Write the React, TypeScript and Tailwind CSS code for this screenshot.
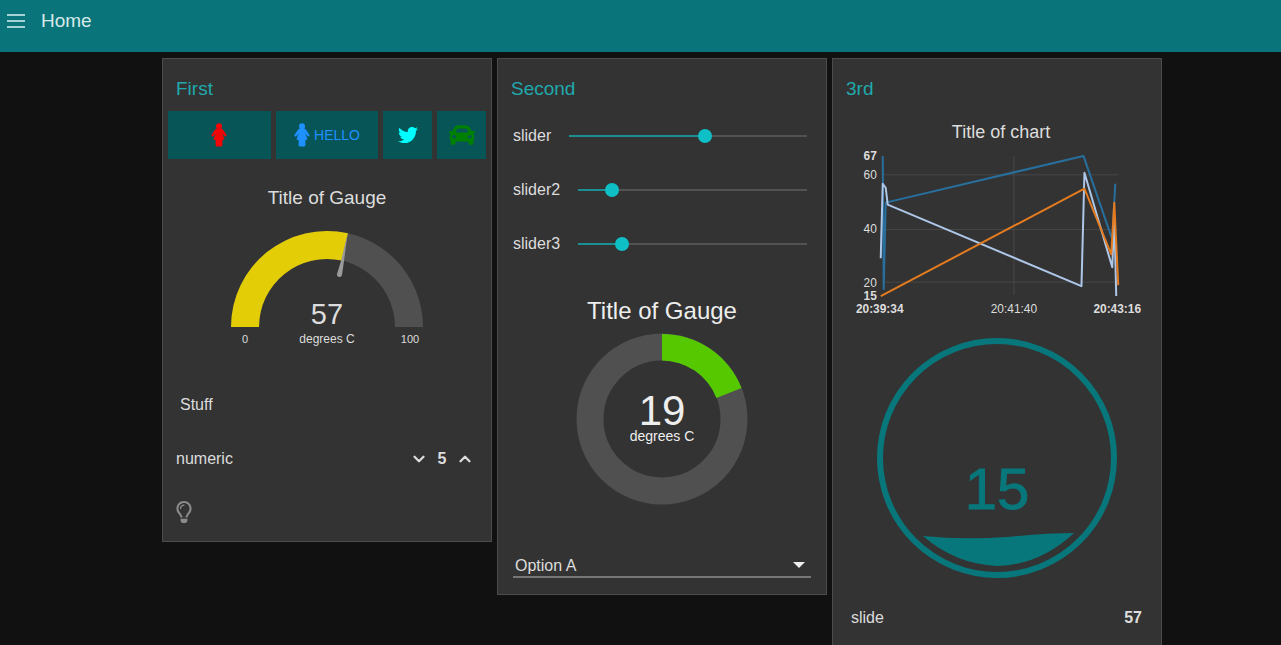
import { ReactNode, useState } from 'react';
import { FaCar, FaRegLightbulb, FaTwitter } from 'react-icons/fa';
import { ChevronDown, ChevronUp } from 'lucide-react';

type CardProps = {
  title: string;
  children: ReactNode;
};

const Card = ({ title, children }: CardProps) => (
  <section className="border border-[#4c4c4c] bg-[#333333] px-[5px] pt-4">
    <h2 className="h-7 px-2 text-[19px] leading-7 text-[#1fa9ad]">{title}</h2>
    {children}
  </section>
);

const FemaleIcon = () => (
  <svg viewBox="0 0 16 24" className="h-6 w-4" fill="currentColor" aria-hidden="true">
    <circle cx="8" cy="3.200" r="3" />
    <path d="M5.800 5.500 H10.200 Q11.200 5.600 11.800 6.600 L15.300 11.600 Q15.900 12.800 15 13.400 Q14.100 13.900 13.400 13 L11.400 10.400 L13.600 16.800 H11.400 V22.300 Q11.300 23.600 10 23.600 H6 Q4.700 23.600 4.600 22.300 V16.800 H2.400 L4.600 10.400 L2.600 13 Q1.900 13.900 1 13.400 Q0.100 12.800 0.700 11.600 L4.200 6.600 Q4.800 5.600 5.800 5.500 Z" />
  </svg>
);

type SliderProps = {
  id: string;
  label: string;
  initial: number;
};

const Slider = ({ id, label, initial }: SliderProps) => {
  const [value, setValue] = useState(initial);

  return (
    <div className="flex h-[54px] items-center gap-[18px]">
      <label htmlFor={id}>{label}</label>
      <div className="relative flex h-4 min-w-0 flex-1 items-center">
        <div className="h-[2px] w-full bg-[#525252]">
          <div className="h-full bg-[#1b9094]" style={{ width: `${value}%` }} />
        </div>
        <div
          className="absolute size-[14px] -translate-x-1/2 rounded-full bg-[#0fbfc6]"
          style={{ left: `${value}%` }}
        />
        <input
          id={id}
          type="range"
          value={value}
          onChange={(e) => setValue(Number(e.target.value))}
          className="absolute inset-0 w-full cursor-pointer opacity-0"
        />
      </div>
    </div>
  );
};

const Gauge = () => (
  <svg viewBox="0 0 202 130" className="mx-auto block w-[202px]" fill="#dddddd" textAnchor="middle">
    <path d="M5 106 A96 96 0 0 1 197 106 H169 A68 68 0 0 0 33 106 Z" fill="#505050" />
    <path d="M5 106 A96 96 0 0 1 121.900 12.300 L115.800 39.600 A68 68 0 0 0 33 106 Z" fill="#e2cd06" />
    <path d="M121.500 13 L115 40 L111 53 A2.500 2.500 0 0 0 116 54 L118 40 Z" fill="#9a9a9a" />
    <text x="101" y="103" fontSize="29">57</text>
    <text x="101" y="122" fontSize="12">degrees C</text>
    <text x="19" y="122" fontSize="11">0</text>
    <text x="184" y="122" fontSize="11">100</text>
  </svg>
);

const Donut = () => (
  <svg viewBox="0 0 172 172" className="mx-auto block w-[172px]" fill="#eeeeee" textAnchor="middle">
    <circle cx="86" cy="86" r="72" fill="none" stroke="#505050" strokeWidth="27" />
    <path d="M86 1 A85 85 0 0 1 165.500 55 L140.400 65 A58.500 58.500 0 0 0 86 27.500 Z" fill="#55c800" />
    <text x="86" y="92" fontSize="42">19</text>
    <text x="86" y="108" fontSize="14">degrees C</text>
  </svg>
);

const Chart = () => (
  <svg viewBox="0 0 320 174" className="block w-full" fontSize="12" fill="#dddddd">
    <path d="M44 29 H282 M44 84 H282 M44 137 H282 M177 10 V150" stroke="#484848" fill="none" />
    <g textAnchor="end">
      <text x="39" y="14" fontWeight="bold">67</text>
      <text x="39" y="33">60</text>
      <text x="39" y="88">40</text>
      <text x="39" y="142">20</text>
      <text x="39" y="155" fontWeight="bold">15</text>
    </g>
    <g textAnchor="middle">
      <text x="42" y="168" fontWeight="bold">20:39:34</text>
      <text x="177" y="168">20:41:40</text>
      <text x="281" y="168" fontWeight="bold">20:43:16</text>
    </g>
    <g fill="none" strokeWidth="2" strokeLinejoin="round">
      <path d="M45 10 L46 144 L48 57 L247 10 L276 94 L279 38" stroke="#286f9e" />
      <path d="M43 113 L45 38 L48 42 L50 59 L245 141 L248 27 L276 122 L278 70 L280 151" stroke="#aec7e8" />
      <path d="M43 151 L248 43 L275 109 L278 57 L282 140" stroke="#e57c1f" />
    </g>
  </svg>
);

const Tank = () => (
  <svg viewBox="0 0 240 240" className="mx-auto block w-[240px]" fill="#08777b">
    <circle cx="120" cy="120" r="117" fill="none" stroke="#08777b" strokeWidth="6" />
    <path d="M46 198 Q86 202 130 199 Q170 195 197 195 Q163 227 120 228 Q78 226 46 198 Z" />
    <text x="120" y="171" fontSize="58" textAnchor="middle" stroke="#08777b" strokeWidth="1">
      15
    </text>
  </svg>
);

export default function App() {
  const [amount, setAmount] = useState(5);

  return (
    <div className="flex h-screen flex-col overflow-hidden bg-[#111111] font-['Liberation_Sans',Arial,sans-serif] text-base text-[#dddddd]">
      <header className="flex h-[52px] shrink-0 items-start gap-4 bg-[#097479] px-[7px] pt-[9px]">
        <button type="button" aria-label="Menu" className="grid h-6 w-[18px] content-center gap-1">
          <span className="h-[2px] bg-[#a5d3d4]" />
          <span className="h-[2px] bg-[#a5d3d4]" />
          <span className="h-[2px] bg-[#a5d3d4]" />
        </button>
        <h1 className="text-[19px] leading-6 text-[#d5e9ea]">Home</h1>
      </header>

      <main className="min-h-0 flex-1 overflow-hidden pt-[6px] pl-[43px]">
        <div className="mx-auto grid max-w-[1000px] grid-cols-3 items-start gap-[5px]">
          <Card title="First">
            <div className="mt-2 grid h-12 grid-cols-6 gap-[5px]">
              <button
                type="button"
                aria-label="Female"
                className="col-span-2 grid place-items-center bg-[#085558] text-[#f00606]"
              >
                <FemaleIcon />
              </button>
              <button
                type="button"
                className="col-span-2 flex items-center justify-center gap-1 bg-[#085558] text-sm text-[#1e90ff]"
              >
                <FemaleIcon />
                HELLO
              </button>
              <button type="button" aria-label="Twitter" className="grid place-items-center bg-[#085558]">
                <FaTwitter size={20} className="text-[#00ffff]" />
              </button>
              <button type="button" aria-label="Car" className="grid place-items-center bg-[#085558]">
                <FaCar size={26} className="text-[#008000]" />
              </button>
            </div>
            <h3 className="mt-[27px] text-center text-[19px] leading-6">Title of Gauge</h3>
            <div className="mt-[11px]">
              <Gauge />
            </div>
            <div className="px-2 pb-[18px]">
              <p className="mt-[27px] px-1 leading-[54px]">Stuff</p>
              <div className="flex h-[54px] items-center justify-between">
                <span>numeric</span>
                <div className="mr-1 flex items-center gap-2">
                  <button type="button" aria-label="Decrease" onClick={() => setAmount(amount - 1)}>
                    <ChevronDown size={18} strokeWidth={3} />
                  </button>
                  <span className="w-3 text-center font-bold">{amount}</span>
                  <button type="button" aria-label="Increase" onClick={() => setAmount(amount + 1)}>
                    <ChevronUp size={18} strokeWidth={3} />
                  </button>
                </div>
              </div>
              <div className="flex h-[37px] items-end">
                <FaRegLightbulb className="h-[22px] w-4 text-[#8c8c8c]" />
              </div>
            </div>
          </Card>

          <Card title="Second">
            <div className="pr-[14px] pl-[10px]">
              <div className="mt-[6px]">
                <Slider id="slider1" label="slider" initial={57} />
                <Slider id="slider2" label="slider2" initial={15} />
                <Slider id="slider3" label="slider3" initial={19} />
              </div>
            </div>
            <h3 className="mt-6 text-center text-2xl leading-8 text-[#eeeeee]">Title of Gauge</h3>
            <div className="mt-[6px]">
              <Donut />
            </div>
            <div className="relative mx-[10px] mt-[49px] mb-4">
              <select
                aria-label="Option"
                className="h-6 w-full appearance-none border-b-2 border-[#777777] bg-[#333333] pl-[2px] text-[#dddddd]"
              >
                <option>Option A</option>
                <option>Option B</option>
              </select>
              <span className="pointer-events-none absolute top-2 right-[6px] border-x-[6px] border-t-[6px] border-x-transparent border-t-[#eeeeee]" />
            </div>
          </Card>

          <Card title="3rd">
            <h3 className="mt-[17px] mb-[2px] pl-2 text-center text-lg leading-6">Title of chart</h3>
            <Chart />
            <div className="mt-[19px]">
              <Tank />
            </div>
            <div className="mt-[14px] flex h-[54px] items-center justify-between pr-[14px] pb-[2px] pl-[13px]">
              <span>slide</span>
              <span className="font-bold">57</span>
            </div>
          </Card>
        </div>
      </main>
    </div>
  );
}
